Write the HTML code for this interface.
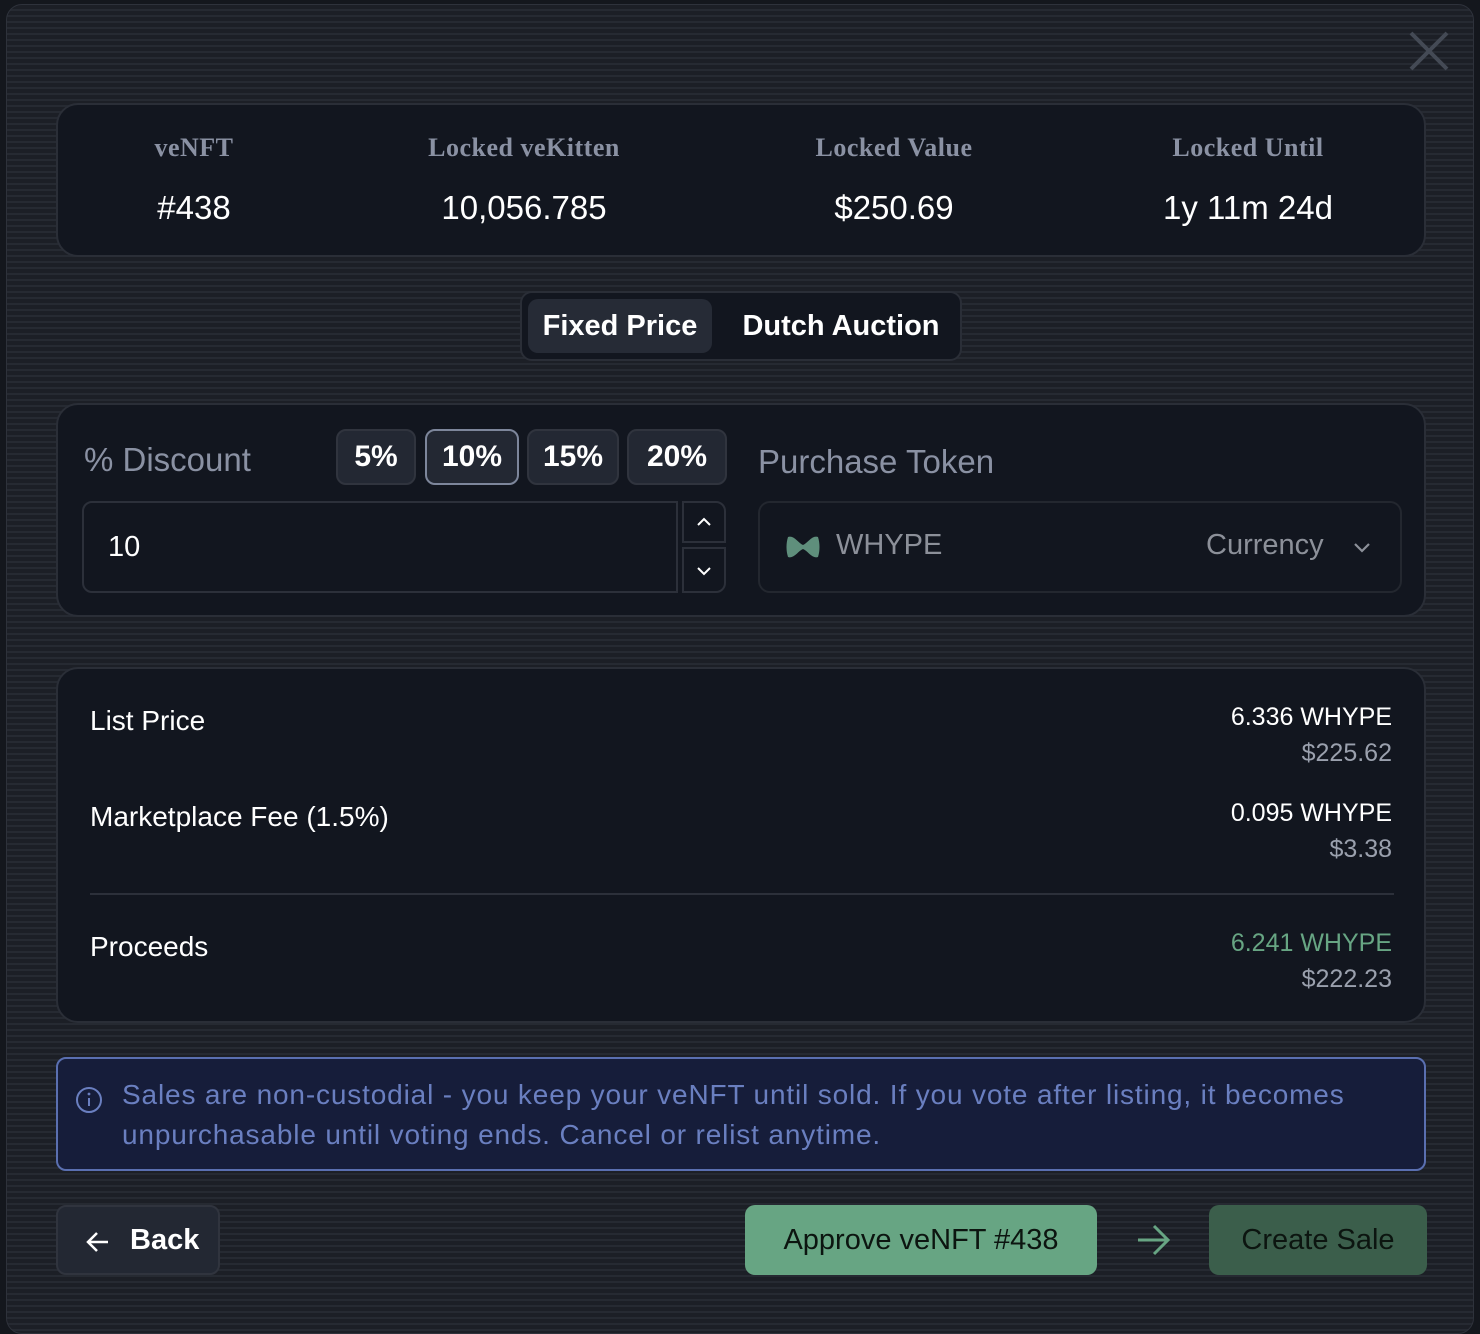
<!DOCTYPE html>
<html><head><meta charset="utf-8"><style>
*{box-sizing:border-box;margin:0;padding:0}
body{width:1480px;height:1328px;background:#14171d;font-family:"Liberation Sans",sans-serif;position:relative;overflow:hidden;color:#fff}
.modal{position:absolute;left:6px;top:4px;width:1468px;height:1330px;border:1px solid #2e323b;border-radius:16px;
background:repeating-linear-gradient(180deg,#1c1f26 0 4px,#262a32 4px 6px)}
.abs{position:absolute}
.panel{position:absolute;background:#12161f;border:2px solid #2a2e37;border-radius:22px}
.lbl{font-family:"Liberation Serif",serif;font-weight:bold;color:#8a91a3;font-size:26px;text-align:center;letter-spacing:0.5px}
.val{font-size:33px;text-align:center;color:#fff}
.btn{position:absolute;background:#232833;border:2px solid #30343e;border-radius:10px;font-size:30px;font-weight:bold;text-align:center;line-height:52px;color:#fff}
.r{text-align:right;font-size:25px;position:absolute;right:32px}
</style></head><body>
<div class="modal"></div>
<svg class="abs" style="left:1408px;top:30px" width="42" height="42"><path d="M3 3L39 39M39 3L3 39" stroke="#444a55" stroke-width="4"/></svg>

<div class="panel" style="left:56px;top:103px;width:1370px;height:154px">
 <div class="abs lbl" style="left:36px;top:28px;width:200px">veNFT</div>
 <div class="abs val" style="left:36px;top:84px;width:200px">#438</div>
 <div class="abs lbl" style="left:316px;top:28px;width:300px">Locked veKitten</div>
 <div class="abs val" style="left:316px;top:84px;width:300px">10,056.785</div>
 <div class="abs lbl" style="left:686px;top:28px;width:300px">Locked Value</div>
 <div class="abs val" style="left:686px;top:84px;width:300px">$250.69</div>
 <div class="abs lbl" style="left:1040px;top:28px;width:300px">Locked Until</div>
 <div class="abs val" style="left:1040px;top:84px;width:300px">1y 11m 24d</div>
</div>

<div class="abs" style="left:520px;top:291px;width:442px;height:70px;background:#12161f;border:2px solid #2a2e37;border-radius:12px"></div>
<div class="abs" style="left:528px;top:299px;width:184px;height:54px;background:#262b36;border-radius:10px;font-size:29px;font-weight:bold;line-height:54px;text-align:center">Fixed Price</div>
<div class="abs" style="left:730px;top:299px;width:222px;height:54px;font-size:29px;font-weight:bold;line-height:54px;text-align:center">Dutch Auction</div>

<div class="panel" style="left:56px;top:403px;width:1370px;height:214px">
 <div class="abs" style="left:26px;top:36px;font-size:33px;color:#8a91a3">% Discount</div>
 <div class="btn" style="left:278px;top:24px;width:80px;height:56px">5%</div>
 <div class="btn" style="left:367px;top:24px;width:94px;height:56px;border-color:#7d869b">10%</div>
 <div class="btn" style="left:469px;top:24px;width:92px;height:56px">15%</div>
 <div class="btn" style="left:569px;top:24px;width:100px;height:56px">20%</div>
 <div class="abs" style="left:24px;top:96px;width:596px;height:92px;border:2px solid #2c303a;border-radius:10px 0 0 10px;font-size:29px;line-height:88px;padding-left:24px">10</div>
 <div class="abs" style="left:624px;top:96px;width:44px;height:42px;border:2px solid #2c303a;border-radius:0 10px 0 0"><svg width="40" height="38"><path d="M14 22l6-6 6 6" stroke="#fff" stroke-width="2" fill="none"/></svg></div>
 <div class="abs" style="left:624px;top:142px;width:44px;height:46px;border:2px solid #2c303a;border-radius:0 0 10px 0"><svg width="40" height="42"><path d="M14 19l6 6 6-6" stroke="#fff" stroke-width="2" fill="none"/></svg></div>
 <div class="abs" style="left:700px;top:38px;font-size:33px;color:#8a91a3">Purchase Token</div>
 <div class="abs" style="left:700px;top:96px;width:644px;height:92px;border:2px solid #23272f;border-radius:12px">
  <svg class="abs" style="left:26px;top:30px" width="34" height="28"><path d="M2 4C8 2 12 10 17 12C22 10 26 2 32 4C34 10 34 18 32 24C26 26 22 18 17 16C12 18 8 26 2 24C0 18 0 10 2 4Z" fill="#5f8f7c"/></svg>
  <div class="abs" style="left:76px;top:26px;font-size:29px;color:#8c9099">WHYPE</div>
  <div class="abs" style="left:446px;top:26px;font-size:29px;color:#8c9099">Currency</div>
  <svg class="abs" style="left:590px;top:34px" width="24" height="20"><path d="M5 7l7 7 7-7" stroke="#8c9099" stroke-width="2.2" fill="none"/></svg>
 </div>
</div>

<div class="panel" style="left:56px;top:667px;width:1370px;height:356px">
 <div class="abs" style="left:32px;top:36px;font-size:28px">List Price</div>
 <div class="r" style="top:34px;color:#fff">6.336 WHYPE</div>
 <div class="r" style="top:70px;color:#9aa0ad">$225.62</div>
 <div class="abs" style="left:32px;top:132px;font-size:28px">Marketplace Fee (1.5%)</div>
 <div class="r" style="top:130px;color:#fff">0.095 WHYPE</div>
 <div class="r" style="top:166px;color:#9aa0ad">$3.38</div>
 <div class="abs" style="left:32px;top:224px;width:1304px;height:2px;background:#2c303a"></div>
 <div class="abs" style="left:32px;top:262px;font-size:28px">Proceeds</div>
 <div class="r" style="top:260px;color:#67a583">6.241 WHYPE</div>
 <div class="r" style="top:296px;color:#9aa0ad">$222.23</div>
</div>

<div class="abs" style="left:56px;top:1057px;width:1370px;height:114px;background:#161d3a;border:2px solid #5a6fb0;border-radius:10px">
 <svg class="abs" style="left:16px;top:26px" width="30" height="30"><circle cx="15" cy="15" r="12" stroke="#6a7fc0" stroke-width="2" fill="none"/><path d="M15 13v8" stroke="#6a7fc0" stroke-width="2"/><circle cx="15" cy="9" r="1.4" fill="#6a7fc0"/></svg>
 <div class="abs" style="left:64px;top:16px;font-size:28px;line-height:40px;color:#6a7fc0;width:1296px;letter-spacing:0.85px">Sales are non-custodial - you keep your veNFT until sold. If you vote after listing, it becomes unpurchasable until voting ends. Cancel or relist anytime.</div>
</div>

<div class="abs" style="left:56px;top:1205px;width:164px;height:70px;background:#232833;border:2px solid #30343e;border-radius:10px">
 <svg class="abs" style="left:26px;top:22px" width="28" height="26"><path d="M24 13H4M13 4L4 13l9 9" stroke="#fff" stroke-width="2.5" fill="none"/></svg>
 <div class="abs" style="left:72px;top:17px;font-size:29px;font-weight:bold">Back</div>
</div>
<div class="abs" style="left:745px;top:1205px;width:352px;height:70px;background:#67a583;border-radius:10px;font-size:29px;line-height:70px;text-align:center;color:#0c1510">Approve veNFT #438</div>
<svg class="abs" style="left:1134px;top:1222px" width="40" height="36"><path d="M4 18H34M20 4l14 14-14 14" stroke="#67a583" stroke-width="3" fill="none"/></svg>
<div class="abs" style="left:1209px;top:1205px;width:218px;height:70px;background:#3b5e4b;border-radius:10px;font-size:29px;line-height:70px;text-align:center;color:#0c1510">Create Sale</div>
</body></html>
